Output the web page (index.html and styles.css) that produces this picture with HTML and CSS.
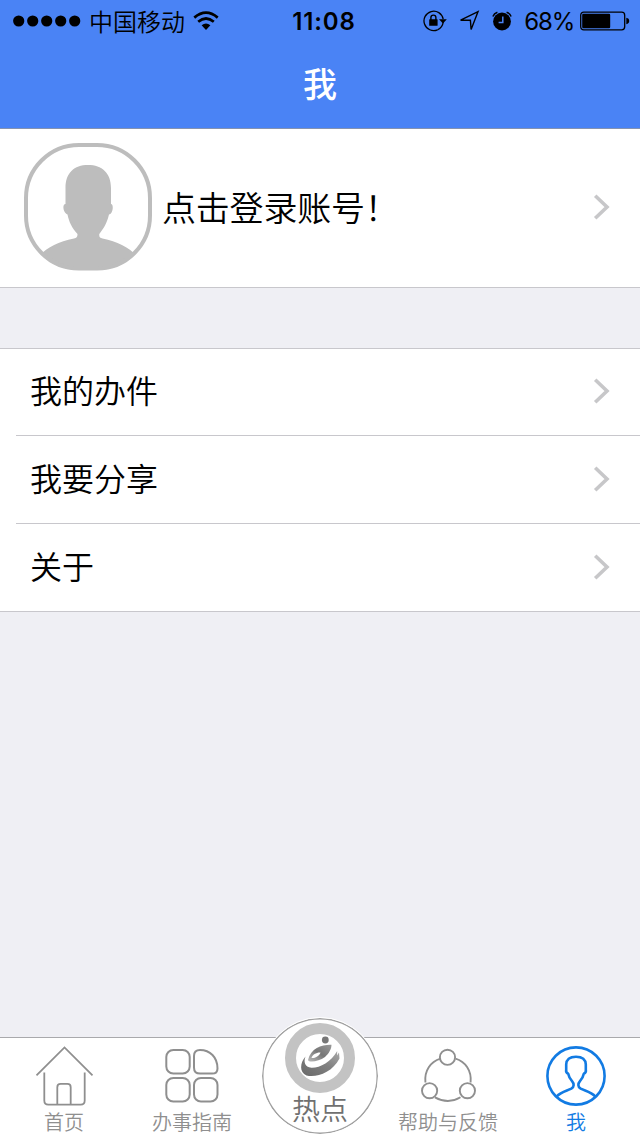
FILE: index.html
```html
<!DOCTYPE html>
<html lang="zh-CN">
<head>
<meta charset="utf-8">
<title>我</title>
<link rel="stylesheet" href="styles.css">
</head>
<body>
<div class="screen">
  <header class="header">
    <div class="status">
      <div class="status-left">
        <svg class="signal" width="68" height="12" viewBox="0 0 68 12"><circle cx="5.7" cy="6" r="5.6"/><circle cx="19.7" cy="6" r="5.6"/><circle cx="33.7" cy="6" r="5.6"/><circle cx="47.7" cy="6" r="5.6"/><circle cx="61.7" cy="6" r="5.6"/></svg>
        <span class="carrier">中国移动</span>
        <svg class="wifi" width="26" height="20" viewBox="0 0 26 20"><g fill="none" stroke="#000" stroke-width="2.7"><path d="M1.3 6.6Q13-3.2 24.7 6.6"/><path d="M5.2 10.8Q13 4.2 20.8 10.8"/></g><path d="M8.6 14.3Q13 10.8 17.4 14.3L13 19Z"/></svg>
      </div>
      <div class="time">11:08</div>
      <div class="status-right">
        <svg class="lock" width="24" height="22" viewBox="0 0 24 22"><path d="M14.5 19.8A9.7 9.7 0 1 1 20.2 9" fill="none" stroke="#000" stroke-width="1.3"/><path d="M20.2 12A9.7 9.7 0 0 1 14.5 19.8" fill="none" stroke="#000" stroke-width="1.3"/><path d="M16 9.2H23.8L20 13.6Z"/><rect x="6.2" y="9.2" width="8.4" height="6.6" rx=".6"/><path d="M7.9 10V7.6a2.5 2.5 0 0 1 5 0V10" fill="none" stroke="#000" stroke-width="1.4"/></svg>
        <svg class="arrow" width="21" height="22" viewBox="0 0 21 22"><path d="M1.6 10.2L19 1.7L12.1 19.5L11.4 10.3Z" fill="none" stroke="#000" stroke-width="1.4"/></svg>
        <svg class="alarm" width="20" height="20" viewBox="0 0 20 20"><circle cx="10" cy="10.5" r="8.9"/><path d="M.9 5.4Q2 2.3 5.4 1.2M19.1 5.4Q18 2.3 14.6 1.2" fill="none" stroke="#000" stroke-width="1.5"/><path d="M10.8 5.5V11.4H6.6" fill="none" stroke="#4a83f5" stroke-width="1.5"/></svg>
        <span class="percent">68%</span>
        <svg class="battery" width="50" height="20" viewBox="0 0 50 20"><rect x=".7" y="1.2" width="44" height="17.6" rx="3" fill="none" stroke="#000" stroke-width="1.3"/><rect x="2.2" y="2.8" width="28" height="14.5" rx="1.2"/><path d="M46.3 6.8Q49.2 7.4 49.2 10T46.3 13.3Z"/></svg>
      </div>
    </div>
    <h1 class="title">我</h1>
  </header>

  <main class="content">
    <section class="account">
      <svg class="avatar" width="128" height="128" viewBox="0 0 128 128">
        <clipPath id="frame"><rect x="1" y="0" width="126" height="127" rx="54"/></clipPath>
        <g clip-path="url(#frame)" fill="#bdbdbd">
          <path d="M41.5 61V45C41.5 30 50 22 64 22S87 30 87 45V61C90 61 89 71 85 71.5C83 80 80 85 75.3 91C75 94 76 95 78.5 95.5C95 99 106 105 116 116V130H12V116C22 105 33 99 50 95.5C52.5 95 53.5 94 53.5 91C48 85 45 79 43.5 71.5C39 70 38 61 41.5 61Z"/>
        </g>
        <rect x="2" y="2" width="124" height="123.5" rx="53" fill="none" stroke="#bdbdbd" stroke-width="4"/>
      </svg>
      <span class="login">点击登录账号！</span>
      <svg class="chevron" width="18" height="28" viewBox="0 0 18 28"><path d="M2.2 2.8L14 14L2.2 25.2"/></svg>
    </section>

    <nav class="menu">
      <a class="row"><span>我的办件</span><svg class="chevron" width="18" height="28" viewBox="0 0 18 28"><path d="M2.2 2.8L14 14L2.2 25.2"/></svg></a>
      <a class="row"><span>我要分享</span><svg class="chevron" width="18" height="28" viewBox="0 0 18 28"><path d="M2.2 2.8L14 14L2.2 25.2"/></svg></a>
      <a class="row"><span>关于</span><svg class="chevron" width="18" height="28" viewBox="0 0 18 28"><path d="M2.2 2.8L14 14L2.2 25.2"/></svg></a>
    </nav>
  </main>

  <footer class="tabs">
    <a class="tab">
      <svg class="icon" width="60" height="62" viewBox="0 0 60 62"><g fill="none" stroke="#8f8f8f" stroke-width="1.8"><path d="M2.5 31.4L30.5 3.4L58.5 31.4"/><path d="M10.3 28.5V56.5Q10.3 60.6 14.3 60.6H46.7Q50.7 60.6 50.7 56.5V28.5"/><path d="M23.3 60.6V43.2Q23.3 39.9 26.6 39.9H33.4Q36.7 39.9 36.7 43.2V60.6"/></g></svg>
      <span class="label">首页</span>
    </a>
    <a class="tab">
      <svg class="icon" width="60" height="62" viewBox="0 0 60 62"><g fill="none" stroke="#8f8f8f" stroke-width="2"><rect x="4.3" y="6" width="23.4" height="23.6" rx="7"/><path d="M38 6C48 6 55.5 13.2 55.5 24.4Q55.5 29.6 50 29.6H38.2Q32 29.6 32 23.4V12Q32 6 38 6Z"/><rect x="4.3" y="34" width="23.4" height="23.6" rx="7"/><rect x="32" y="34" width="23.5" height="23.6" rx="7"/></g></svg>
      <span class="label">办事指南</span>
    </a>
    <a class="tab tab-hot">
      <span class="hot">
        <svg class="emblem" width="72" height="72" viewBox="0 0 72 72">
          <defs>
            <linearGradient id="swoosh" x1="0" y1="1" x2="1" y2="0"><stop offset="0" stop-color="#686868"/><stop offset=".55" stop-color="#808080"/><stop offset="1" stop-color="#aaa"/></linearGradient>
            <linearGradient id="inner" x1="0" y1="1" x2="1" y2="0"><stop offset="0" stop-color="#bbb"/><stop offset=".5" stop-color="#777"/><stop offset="1" stop-color="#999"/></linearGradient>
          </defs>
          <circle cx="36" cy="36" r="29.5" fill="none" stroke="#c3c3c3" stroke-width="11"/>
          <circle cx="41.3" cy="18" r="3.4" fill="#777"/>
          <path d="M47.5 22.8C38 22.5 27 26 24 38C25 41 35 39.5 41 35C45 31.5 47.5 27 47.5 22.8ZM36.5 30.5C35.5 34 30.5 36.5 27.5 36C28.5 32.5 32.5 30.2 36.5 30.5Z" fill="url(#inner)" fill-rule="evenodd"/>
          <path d="M21.5 34.5C16 40.5 15 50.5 22.5 53.5C32 56 48 51 55.5 36.5L55 30.5L53 33.5L53.2 29C47 40 36 46 27.5 45.8C20.5 45.2 19.5 39.5 21.5 34.5Z" fill="url(#swoosh)"/>
        </svg>
        <span class="hot-label">热点</span>
      </span>
    </a>
    <a class="tab">
      <svg class="icon" width="60" height="62" viewBox="0 0 60 62"><g fill="none" stroke="#8f8f8f" stroke-width="1.9"><path d="M22.5 14.6C12.5 17.7 6.2 26.5 7.4 38.5M37.5 14.6C47.5 17.7 53.8 26.5 52.6 38.5M17 53.3Q30 60.7 42.5 53.3"/><circle cx="29.5" cy="13.3" r="7.6"/><circle cx="11.6" cy="46.7" r="7.6"/><circle cx="49.4" cy="46.7" r="7.6"/></g></svg>
      <span class="label">帮助与反馈</span>
    </a>
    <a class="tab active">
      <svg class="icon" width="60" height="62" viewBox="0 0 60 62"><g fill="none" stroke="#127be3" stroke-width="2.6"><circle cx="30" cy="32" r="28.6"/><path d="M10.5 52.6C15.5 47.5 21 47 25.3 44.7C28.5 42.7 28 39.5 26.2 37.4Q23 34 22.2 29.8Q19.6 28.6 20.2 25.4V20.5Q20.6 12.8 30 12.8T39.8 20.5V25.4Q40.4 28.6 37.8 29.8Q37 34 33.8 37.4C32 39.5 31.5 42.7 34.7 44.7C39 47 44.5 47.5 49.5 52.6" stroke-linejoin="round"/></g></svg>
      <span class="label">我</span>
    </a>
  </footer>
</div>
</body>
</html>
```
FILE: styles.css
```css
* { box-sizing: border-box; }
body {
  margin: 0;
  font-family: "Noto Sans CJK SC", sans-serif;
  color: #000;
}
svg { display: block; flex: none; }
.screen {
  width: 640px;
  height: 1136px;
  display: flex;
  flex-direction: column;
  background: #efeff4;
  overflow: hidden;
}
.header {
  height: 129px;
  flex: none;
  background: #4a83f5;
  border-bottom: 1px solid #8593b0;
}
.status {
  height: 41px;
  display: grid;
  grid-template-columns: 1fr auto 1fr;
  align-items: center;
  padding: 0 10px 0 13px;
}
.status-left, .status-right { display: flex; align-items: center; }
.status-right { justify-content: flex-end; }
.carrier {
  margin-left: 8px;
  font-size: 24px;
  font-weight: 350;
  line-height: 40px;
}
.wifi { margin-left: 8px; }
.time {
  font: 600 24px/38px Inter, sans-serif;
  letter-spacing: .9px;
  padding: 2px 0 0 5px;
}
.arrow { margin-left: 12px; }
.alarm { margin-left: 12px; }
.percent {
  margin: 2px 6px 0 12px;
  font: 400 24px/38px Inter, sans-serif;
  letter-spacing: -1.2px;
}
.title {
  margin: 0;
  padding-top: 18px;
  text-align: center;
  color: #fff;
  font-size: 34px;
  font-weight: 500;
  line-height: 48px;
}
.content { flex: 1; }
.account {
  height: 159px;
  display: flex;
  align-items: center;
  padding: 0 29px 2px 24px;
  background: #fff;
  border-bottom: 1px solid #c8c7cc;
}
.login {
  flex: 1;
  margin-left: 10px;
  padding-bottom: 1px;
  font-size: 34px;
  font-weight: 350;
  line-height: 48px;
  letter-spacing: -.2px;
}
.chevron {
  fill: none;
  stroke: #c7c7c9;
  stroke-width: 3.6;
}
.menu {
  margin-top: 60px;
  padding-left: 16px;
  background: #fff;
  border-top: 1px solid #c8c7cc;
  border-bottom: 1px solid #c8c7cc;
}
.row {
  height: 88px;
  display: flex;
  align-items: center;
  justify-content: space-between;
  padding: 0 29px 2px 14px;
  border-bottom: 1px solid #c8c7cc;
  font-size: 32px;
  font-weight: 350;
  line-height: 46px;
}
.row span { padding-bottom: 3px; }
.row:first-child { height: 87px; }
.row:first-child span { padding-bottom: 4px; }
.row:last-child { height: 87px; border-bottom: 0; }
.tabs {
  height: 99px;
  flex: none;
  display: grid;
  grid-template-columns: repeat(5, 128px);
  background: #fff;
  border-top: 1px solid #a9a9ac;
}
.tab {
  position: relative;
  display: flex;
  flex-direction: column;
  align-items: center;
  padding-top: 6px;
  color: #8f8f8f;
}
.label {
  margin-top: 2px;
  font-size: 20px;
  font-weight: 350;
  line-height: 28px;
}
.active { color: #127be3; }
.hot {
  position: absolute;
  top: -21px;
  left: 5px;
  width: 118px;
  height: 118px;
  display: flex;
  flex-direction: column;
  align-items: center;
  padding-top: 4px;
  border-radius: 50%;
  background: #fff;
  border: 1px solid #fff;
  box-shadow: inset 0 0 0 1.5px #a0a0a0;
}
.hot-label {
  margin-top: -6px;
  font-size: 28px;
  font-weight: 350;
  line-height: 40px;
  color: #707070;
}
```
